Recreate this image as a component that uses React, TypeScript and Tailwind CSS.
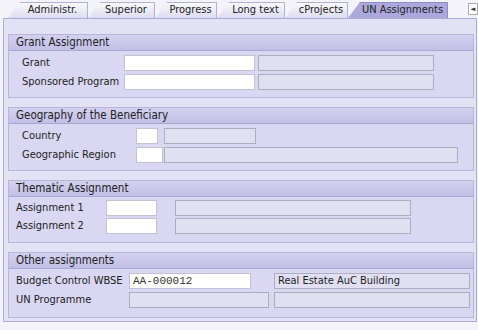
import React from "react";

const tabs: [string, string][] = [
  ["Administr.", "w-[80px]"],
  ["Superior", "w-[67px]"],
  ["Progress", "w-[62px]"],
  ["Long text", "w-[68px]"],
  ["cProjects", "w-[63px]"],
  ["UN Assignments", "w-[100px]"],
];

const Tab = ({ label, w, active }: { label: string; w: string; active?: boolean }) => (
  <div
    className={`${w} h-[16px] flex items-center justify-center pl-[10px] whitespace-nowrap border-t border-r ${
      active
        ? "bg-[#aca8dc] border-[#8f8bc6]"
        : "bg-gradient-to-b from-[#f8f8fc] to-[#dedcf0] border-[#b3b0d6]"
    }`}
    style={{ clipPath: "polygon(12px 0, 100% 0, 100% 100%, 0 100%)" }}
  >
    <span className="text-[11px] text-[#222]">{label}</span>
  </div>
);

const Input = ({ w, value, grey, mono }: { w: string; value?: string; grey?: boolean; mono?: boolean }) => (
  <div
    className={`${w} h-[16px] shrink-0 border flex items-center px-[3px] whitespace-nowrap ${
      grey ? "bg-[#e1dff2] border-[#aeadbd]" : "bg-white border-[#c3c2d4]"
    } ${mono ? "font-['Liberation_Mono'] text-[11px] text-[#333]" : "text-[11px] text-[#222]"}`}
  >
    {value}
  </div>
);

const Group = ({ title, children, cls }: { title: string; children: React.ReactNode; cls: string }) => (
  <div className={`ml-[4px] mr-[2px] border border-[#b9b6dc] bg-[#d9d7f1] ${cls}`}>
    <div className="h-[16px] bg-gradient-to-b from-[#d4d1ef] to-[#c2bfe6] border-b border-[#aaa6d6] flex items-center pl-[7px] text-[11.5px] text-[#222] whitespace-nowrap">
      {title}
    </div>
    {children}
  </div>
);

const Row = ({ children }: { children: React.ReactNode }) => (
  <div className="flex items-center h-[18px] text-[11px] text-[#222] whitespace-nowrap">{children}</div>
);

export default function App() {
  return (
    <div className="w-[478px] h-[330px] bg-[#f3f3f9] font-['DejaVu_Sans_Condensed','DejaVu_Sans',sans-serif] overflow-hidden">
      <div className="flex items-end h-[18px] pl-[8px]">
        {tabs.map(([t, w]) => (
          <Tab key={t} label={t} w={w} active={t === "UN Assignments"} />
        ))}
        <div className="ml-auto mb-[3px] w-[10px] h-[12px] bg-white border border-[#a9a9b9] flex items-center justify-center text-[7px] text-[#333]">
          ◄
        </div>
      </div>
      <div className="ml-[3px] mr-[1px] h-[304px] border border-[#aeaad6] bg-[#e3e2f5] pt-[15px] flex flex-col gap-[9px]">
        <Group title="Grant Assignment" cls="h-[64px]">
          <div className="pt-[3px] pl-[13px] flex flex-col gap-[1px]">
            <Row>
              <span className="w-[102px]">Grant</span>
              <Input w="w-[131px]" />
              <div className="w-[3px]" />
              <Input w="w-[176px]" grey />
            </Row>
            <Row>
              <span className="w-[102px]">Sponsored Program</span>
              <Input w="w-[131px]" />
              <div className="w-[3px]" />
              <Input w="w-[176px]" grey />
            </Row>
          </div>
        </Group>
        <Group title="Geography of the Beneficiary" cls="h-[64px]">
          <div className="pt-[3px] pl-[13px] flex flex-col gap-[1px]">
            <Row>
              <span className="w-[114px]">Country</span>
              <Input w="w-[22px]" />
              <div className="w-[6px]" />
              <Input w="w-[92px]" grey />
            </Row>
            <Row>
              <span className="w-[114px]">Geographic Region</span>
              <Input w="w-[27px]" />
              <div className="w-[1px]" />
              <Input w="w-[294px]" grey />
            </Row>
          </div>
        </Group>
        <Group title="Thematic Assignment" cls="h-[63px]">
          <div className="pt-[2px] pl-[7px] flex flex-col gap-[0px]">
            <Row>
              <span className="w-[90px]">Assignment 1</span>
              <Input w="w-[51px]" />
              <div className="w-[18px]" />
              <Input w="w-[236px]" grey />
            </Row>
            <Row>
              <span className="w-[90px]">Assignment 2</span>
              <Input w="w-[51px]" />
              <div className="w-[18px]" />
              <Input w="w-[236px]" grey />
            </Row>
          </div>
        </Group>
        <Group title="Other assignments" cls="h-[66px]">
          <div className="pt-[3px] pl-[7px] flex flex-col gap-[1px]">
            <Row>
              <span className="w-[113px]">Budget Control WBSE</span>
              <Input w="w-[122px]" value="AA-000012" mono />
              <div className="w-[23px]" />
              <Input w="w-[196px]" value="Real Estate AuC Building" grey />
            </Row>
            <Row>
              <span className="w-[113px]">UN Programme</span>
              <Input w="w-[140px]" grey />
              <div className="w-[5px]" />
              <Input w="w-[196px]" grey />
            </Row>
          </div>
        </Group>
      </div>
    </div>
  );
}
